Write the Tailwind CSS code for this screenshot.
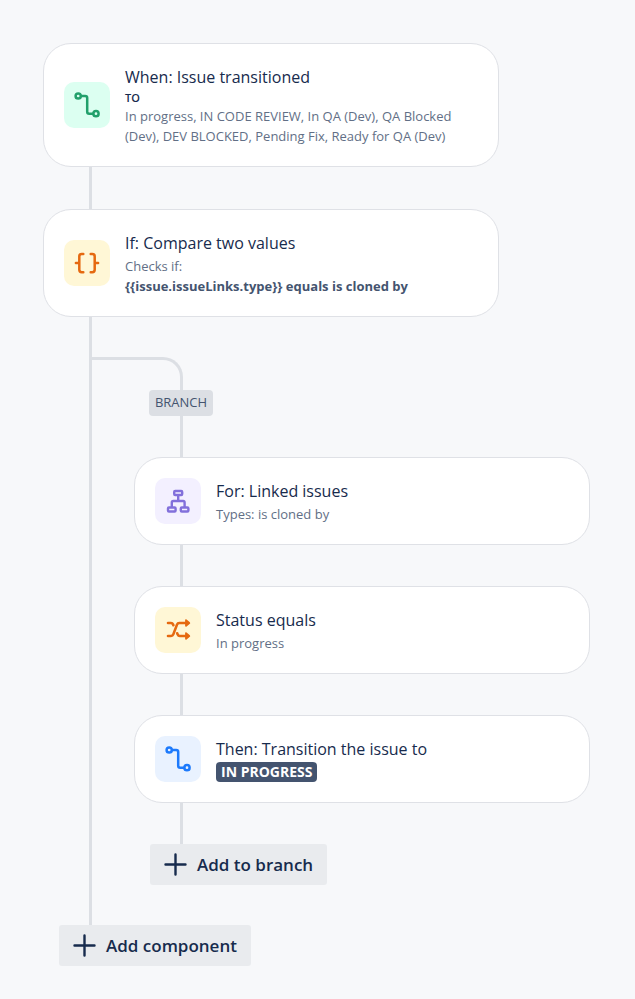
<!DOCTYPE html>
<html lang="en">
<head>
    <meta charset="UTF-8">
    <meta name="viewport" content="width=device-width, initial-scale=1.0">
    <title>Automation rule</title>
    <script src="https://cdn.jsdelivr.net/npm/@tailwindcss/browser@4"></script>
</head>
<body class="min-h-screen bg-[#f7f8fa] font-['Segoe_UI','Open_Sans',sans-serif] text-[#172b4d]">
    <main class="pt-[43px] pb-8 pl-[43px] pr-[45px]">
        <!-- Trigger -->
        <section class="mr-[91px] flex items-center gap-[15px] rounded-[28px] border border-[#dfe1e6] bg-white p-5">
            <div class="size-[46px] shrink-0 rounded-[10px] bg-[#dcfff1] text-[#22a06b]">
                <svg viewBox="0 0 46 46" fill="none" stroke="currentColor" stroke-width="2.5">
                    <circle cx="14.2" cy="14" r="2.6"/>
                    <circle cx="32" cy="31.7" r="2.6"/>
                    <path d="M17 14h4.2q2 0 2 2v13.7q0 2 2 2h4"/>
                </svg>
            </div>
            <div class="min-w-0 flex-1">
                <h2 class="text-base leading-[26px]">When: Issue transitioned</h2>
                <p class="text-[11px] leading-4 font-semibold">TO</p>
                <p class="text-[13px] leading-5 text-[#626f86]">In progress, IN CODE REVIEW, In QA (Dev), QA Blocked (Dev), DEV BLOCKED, Pending Fix, Ready for QA (Dev)</p>
            </div>
        </section>

        <div class="ml-[46px] h-[42px] w-[3px] bg-[#dcdfe4]"></div>

        <!-- Condition -->
        <section class="mr-[91px] flex items-center gap-[15px] rounded-[28px] border border-[#dfe1e6] bg-white p-5">
            <div class="size-[46px] shrink-0 rounded-[10px] bg-[#fff7d6] text-[#e56910]">
                <svg viewBox="0 0 46 46" fill="none" stroke="currentColor" stroke-width="2.5" stroke-linecap="round" stroke-linejoin="round">
                    <path d="M19.3 14h-1.6q-2.4 0-2.4 2.4v13.4q0 2.4 2.4 2.4h1.6M11.9 23h3.4"/>
                    <path d="M26.7 14h1.6q2.4 0 2.4 2.4v13.4q0 2.4-2.4 2.4h-1.6M34.1 23h-3.4"/>
                </svg>
            </div>
            <div class="min-w-0 flex-1">
                <h2 class="text-base leading-[26px]">If: Compare two values</h2>
                <p class="text-[13px] leading-5 text-[#626f86]">Checks if:</p>
                <p class="text-[13px] leading-5 font-bold text-[#44546f]">{{issue.issueLinks.type}} equals is cloned by</p>
            </div>
        </section>

        <!-- Branch, hanging off the trunk line -->
        <div class="ml-[46px] border-l-3 border-[#dcdfe4] pt-10 pb-10">
            <div class="h-[33px] w-[91px] rounded-tr-[20px] border-t-3 border-r-3 border-[#dcdfe4]"></div>
            <div class="ml-[57px] flex h-[26px] w-[64px] items-center justify-center rounded bg-[#dcdfe4] text-[13px] text-[#44546f]">BRANCH</div>
            <div class="ml-[88px] h-[41px] w-[3px] bg-[#dcdfe4]"></div>

            <section class="ml-[42px] flex items-center gap-[15px] rounded-[28px] border border-[#dfe1e6] bg-white p-5">
                <div class="size-[46px] shrink-0 rounded-[10px] bg-[#f3f0ff] text-[#8270db]">
                    <svg viewBox="0 0 46 46" fill="none" stroke="currentColor" stroke-width="2.4">
                        <rect x="19.2" y="13" width="8" height="4" rx="1"/>
                        <rect x="13" y="29.5" width="7.6" height="4" rx="1"/>
                        <rect x="25.8" y="29.5" width="7.6" height="4" rx="1"/>
                        <path d="M23.2 17v6M16.8 29v-4.5q0-1.5 1.5-1.5h9.8q1.5 0 1.5 1.5V29"/>
                    </svg>
                </div>
                <div class="min-w-0 flex-1">
                    <h2 class="text-base leading-[26px]">For: Linked issues</h2>
                    <p class="text-[13px] leading-5 text-[#626f86]">Types: is cloned by</p>
                </div>
            </section>

            <div class="ml-[88px] h-[41px] w-[3px] bg-[#dcdfe4]"></div>

            <section class="ml-[42px] flex items-center gap-[15px] rounded-[28px] border border-[#dfe1e6] bg-white p-5">
                <div class="size-[46px] shrink-0 rounded-[10px] bg-[#fff7d6] text-[#e56910]">
                    <svg viewBox="0 0 46 46" fill="none" stroke="currentColor" stroke-width="2.6" stroke-linecap="round" stroke-linejoin="round">
                        <path d="M13 29h3q1.7 0 2.3-1.6l3.7-9.8q.6-1.6 2.3-1.6h6.7"/>
                        <path d="M13 16h3q1.5 0 2 1.2l.4 1M22.2 26.3l.5 1.3q.6 1.4 2.1 1.4h6.2"/>
                        <path fill="currentColor" stroke-width="1.8" d="M31 13.2v5.6l3.3-2.8zM31 26.2v5.6l3.3-2.8z"/>
                    </svg>
                </div>
                <div class="min-w-0 flex-1">
                    <h2 class="text-base leading-[26px]">Status equals</h2>
                    <p class="text-[13px] leading-5 text-[#626f86]">In progress</p>
                </div>
            </section>

            <div class="ml-[88px] h-[41px] w-[3px] bg-[#dcdfe4]"></div>

            <section class="ml-[42px] flex items-center gap-[15px] rounded-[28px] border border-[#dfe1e6] bg-white p-5">
                <div class="size-[46px] shrink-0 rounded-[10px] bg-[#e9f2ff] text-[#1d7afc]">
                    <svg viewBox="0 0 46 46" fill="none" stroke="currentColor" stroke-width="2.5">
                        <circle cx="14.2" cy="14" r="2.6"/>
                        <circle cx="32" cy="31.7" r="2.6"/>
                        <path d="M17 14h4.2q2 0 2 2v13.7q0 2 2 2h4"/>
                    </svg>
                </div>
                <div class="min-w-0 flex-1">
                    <h2 class="text-base leading-[26px]">Then: Transition the issue to</h2>
                    <p class="flex"><span class="rounded bg-[#44546f] px-[5px] text-sm leading-5 font-bold text-white">IN PROGRESS</span></p>
                </div>
            </section>

            <div class="ml-[88px] h-[41px] w-[3px] bg-[#dcdfe4]"></div>

            <button type="button" class="ml-[58px] flex h-[41px] items-center gap-[10px] rounded-[3px] bg-[#e9ebee] px-[14px] text-[17px] font-semibold">
                <svg class="size-[23px]" viewBox="0 0 23 23" fill="none" stroke="currentColor" stroke-width="2.4" stroke-linecap="round">
                    <path d="M11.5 1.5v20M1.5 11.5h20"/>
                </svg>
                Add to branch
            </button>
        </div>

        <button type="button" class="ml-4 flex h-[41px] items-center gap-[10px] rounded-[3px] bg-[#e9ebee] px-[14px] text-[17px] font-semibold">
            <svg class="size-[23px]" viewBox="0 0 23 23" fill="none" stroke="currentColor" stroke-width="2.4" stroke-linecap="round">
                <path d="M11.5 1.5v20M1.5 11.5h20"/>
            </svg>
            Add component
        </button>
    </main>
</body>
</html>
